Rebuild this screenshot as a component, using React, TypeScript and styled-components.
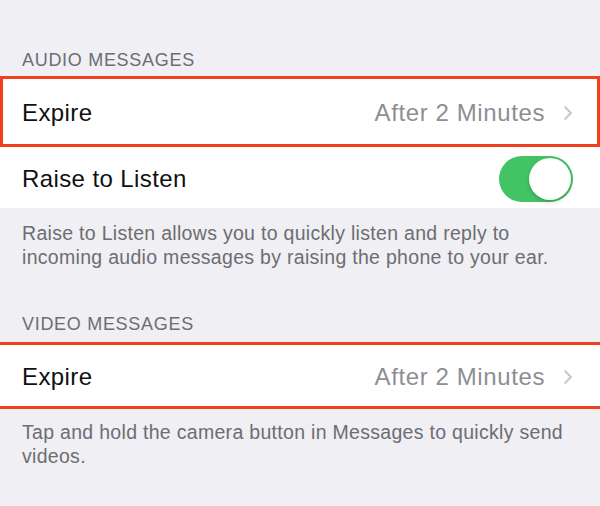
import { FC } from "react";
import styled, { createGlobalStyle } from "styled-components";

const GlobalStyle = createGlobalStyle`
  html, body {
    margin: 0;
    padding: 0;
    background: #efeff4;
  }
  body {
    font-family: "Liberation Sans", Arial, sans-serif;
    -webkit-font-smoothing: antialiased;
  }
`;

const Screen = styled.div`
  width: 600px;
  height: 506px;
  overflow: hidden;
  background: #efeff4;
`;

const SectionHeader = styled.div<{ $top: number; $bottom: number }>`
  padding: ${(p) => p.$top}px 22px ${(p) => p.$bottom}px;
  font-size: 18px;
  line-height: 18px;
  letter-spacing: 0.7px;
  color: #6d6d72;
  text-transform: uppercase;
`;

const Card = styled.div`
  background: #fff;
  display: flex;
  flex-direction: column;
`;

const Row = styled.div<{ $height: number; $mark?: "box" | "lines" }>`
  box-sizing: border-box;
  height: ${(p) => p.$height}px;
  display: flex;
  align-items: center;
  justify-content: space-between;
  padding: 3px 24px 0 22px;
  background: #fff;
  ${(p) =>
    p.$mark === "box"
      ? "border: 3px solid #f0401e; padding-left: 19px; padding-right: 24px;"
      : p.$mark === "lines"
      ? "border-top: 3px solid #f0401e; border-bottom: 3px solid #f0401e; padding-right: 27px;"
      : "padding-right: 27px;"}
`;

const Label = styled.span`
  font-size: 24px;
  letter-spacing: 0.4px;
  color: #111;
`;

const Detail = styled.span`
  display: flex;
  align-items: center;
  gap: 18px;
  font-size: 24px;
  letter-spacing: 0.6px;
  color: #8e8e93;
`;

const Chevron = styled.svg`
  width: 10px;
  height: 16px;
  display: block;
`;

const Toggle = styled.div<{ $on: boolean }>`
  position: relative;
  width: 74px;
  height: 46px;
  border-radius: 23px;
  background: ${(p) => (p.$on ? "#42c465" : "#e5e5ea")};
  &::after {
    content: "";
    position: absolute;
    top: 2px;
    ${(p) => (p.$on ? "right: 2px;" : "left: 2px;")}
    width: 42px;
    height: 42px;
    border-radius: 50%;
    background: #fff;
    box-shadow: 0 2px 4px rgba(0, 0, 0, 0.18), 0 0 0 0.5px rgba(0, 0, 0, 0.06);
  }
`;

const Footer = styled.p<{ $top: number }>`
  margin: 0;
  padding: ${(p) => p.$top}px 22px 0;
  font-size: 19.5px;
  line-height: 24px;
  letter-spacing: 0.3px;
  color: #6d6d72;
`;

const ValueCell: FC<{ value: string }> = ({ value }) => (
  <Detail>
    {value}
    <Chevron viewBox="0 0 10 16">
      <path d="M1.5 1.5 L8 8 L1.5 14.5" fill="none" stroke="#c7c7cc" strokeWidth="2" />
    </Chevron>
  </Detail>
);

const App: FC = () => (
  <>
    <GlobalStyle />
    <Screen>
      <SectionHeader $top={51} $bottom={7}>Audio Messages</SectionHeader>
      <Card>
        <Row $height={71} $mark="box">
          <Label>Expire</Label>
          <ValueCell value="After 2 Minutes" />
        </Row>
        <Row $height={61}>
          <Label>Raise to Listen</Label>
          <Toggle $on />
        </Row>
      </Card>
      <Footer $top={13}>
        Raise to Listen allows you to quickly listen and reply to incoming audio messages by raising the phone to your
        ear.
      </Footer>
      <SectionHeader $top={46} $bottom={9}>Video Messages</SectionHeader>
      <Card>
        <Row $height={67} $mark="lines">
          <Label>Expire</Label>
          <ValueCell value="After 2 Minutes" />
        </Row>
      </Card>
      <Footer $top={11}>Tap and hold the camera button in Messages to quickly send videos.</Footer>
    </Screen>
  </>
);

export default App;
